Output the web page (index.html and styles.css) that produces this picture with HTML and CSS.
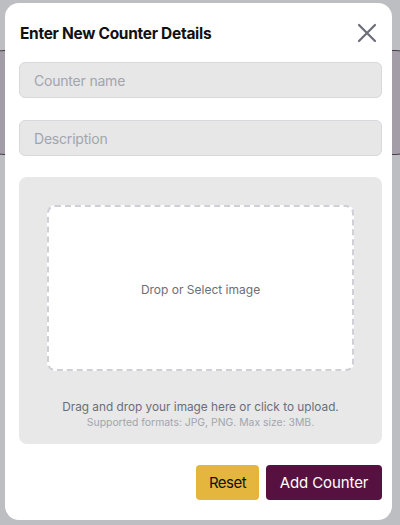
FILE: index.html
```html
<!DOCTYPE html>
<html>
<head>
<meta charset="utf-8">
<link rel="stylesheet" href="styles.css">
</head>
<body>
<div class="backdrop-card"></div>
<div class="modal">
  <div class="header">
    <h2 class="title">Enter New Counter Details</h2>
    <button class="close" aria-label="Close">
      <svg width="20" height="20" viewBox="0 0 20 20"><path d="M2 2 L18 18 M18 2 L2 18" stroke="#6b6e78" stroke-width="2.2" stroke-linecap="round" fill="none"/></svg>
    </button>
  </div>
  <input class="field" type="text" placeholder="Counter name">
  <input class="field" type="text" placeholder="Description">
  <div class="upload">
    <div class="dropzone">Drop or Select image</div>
    <p class="hint">Drag and drop your image here or click to upload.</p>
    <p class="formats">Supported formats: JPG, PNG. Max size: 3MB.</p>
  </div>
  <div class="actions">
    <button class="btn reset">Reset</button>
    <button class="btn add">Add Counter</button>
  </div>
</div>
</body>
</html>
```

FILE: styles.css
```css
* { box-sizing: border-box; }
html, body { margin: 0; padding: 0; }
body {
  width: 400px;
  height: 525px;
  background: #bdbec2;
  font-family: Inter, "Noto Sans", sans-serif;
  position: relative;
  overflow: hidden;
}
.backdrop-card {
  position: absolute;
  left: -20px;
  right: -20px;
  top: 50px;
  height: 105px;
  border: 1.5px solid #4a3c4c;
  border-radius: 24px;
  background: #a39da7;
}
.modal {
  position: absolute;
  left: 5px;
  top: 3px;
  width: 387px;
  height: 517px;
  background: #fff;
  border-radius: 14px;
  padding: 19px 10px 0 14px;
  display: flex;
  flex-direction: column;
}
.header {
  display: flex;
  align-items: center;
  justify-content: space-between;
  height: 22px;
}
.title {
  margin: 0 0 0 1px;
  font-size: 15.5px;
  font-weight: 700;
  color: #111;
  letter-spacing: -0.3px;
}
.close {
  background: none;
  border: 0;
  padding: 0;
  width: 20px;
  height: 20px;
  margin-right: 5px;
  display: flex;
}
.field {
  display: block;
  width: 363px;
  height: 36px;
  margin-top: 18px;
  background: #e7e7e8;
  border: 1px solid #d8d8dd;
  border-radius: 6px;
  padding: 0 14px;
  font-family: inherit;
  font-size: 14px;
  letter-spacing: -0.2px;
  color: #333;
}
.field + .field { margin-top: 22px; }
.field::placeholder { color: #a2a5ad; }
.upload {
  margin-top: 21px;
  width: 363px;
  height: 267px;
  background: #e8e8e8;
  border-radius: 8px;
  padding: 28px 28px 0 28px;
  display: flex;
  flex-direction: column;
  align-items: center;
}
.dropzone {
  width: 307px;
  height: 166px;
  background: #fff;
  border: 2px dashed #cfd0d6;
  border-radius: 8px;
  display: flex;
  align-items: center;
  justify-content: center;
  font-size: 12px;
  color: #6b6e78;
  padding-top: 2px;
}
.hint {
  margin: 28px 0 0;
  font-size: 11.8px;
  color: #6b6e78;
  line-height: 16px;
}
.formats {
  margin: 0;
  font-size: 10.4px;
  color: #a2a5ad;
  line-height: 16px;
}
.actions {
  display: flex;
  justify-content: flex-end;
  gap: 7px;
  margin-top: 21px;
  width: 363px;
}
.btn {
  height: 35px;
  border: 0;
  border-radius: 4px;
  font-family: inherit;
  font-size: 15px;
  padding: 0;
}
.reset {
  width: 63px;
  background: #e4b63e;
  color: #111;
  letter-spacing: -0.5px;
}
.add {
  width: 116px;
  background: #561141;
  color: #fff;
  letter-spacing: -0.1px;
}
```
